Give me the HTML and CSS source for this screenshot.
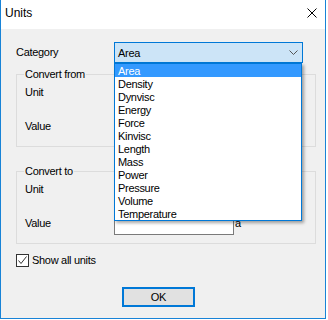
FILE: index.html
```html
<!DOCTYPE html>
<html lang="en">

<head>
  <meta charset="UTF-8">
  <title>Units</title>
  <link rel="stylesheet" href="styles.css">
</head>

<body>

  <div class="window">
    <div class="titlebar">
      <span class="title">Units</span>
      <svg class="close" width="10" height="10" viewBox="0 0 10 10">
        <path d="M0.5 0.5 L9.5 9.5 M9.5 0.5 L0.5 9.5" stroke="#000" stroke-width="1" fill="none"/>
      </svg>
    </div>

    <div class="client">
      <div class="category">
        <label class="cat-label">Category</label>
        <div class="combo active">
          <span>Area</span>
          <svg class="chevron" width="9" height="5" viewBox="0 0 9 5">
            <path d="M0.5 0.5 L4.5 4.5 L8.5 0.5" stroke="#555" stroke-width="1" fill="none"/>
          </svg>
          <ul class="droplist">
            <li class="selected">Area</li>
            <li>Density</li>
            <li>Dynvisc</li>
            <li>Energy</li>
            <li>Force</li>
            <li>Kinvisc</li>
            <li>Length</li>
            <li>Mass</li>
            <li>Power</li>
            <li>Pressure</li>
            <li>Volume</li>
            <li>Temperature</li>
          </ul>
        </div>
      </div>

      <fieldset class="group">
        <legend>Convert from</legend>
        <div class="fields">
          <span>Unit</span>
          <div class="combo plain"></div>
          <span>Value</span>
          <div class="value-row"><div class="textbox"></div><span>a</span></div>
        </div>
      </fieldset>

      <fieldset class="group second">
        <legend>Convert to</legend>
        <div class="fields">
          <span>Unit</span>
          <div class="combo plain"></div>
          <span>Value</span>
          <div class="value-row"><div class="textbox"></div><span>a</span></div>
        </div>
      </fieldset>

      <div class="check-row">
        <span class="checkbox">
          <svg width="11" height="11" viewBox="0 0 11 11">
            <path d="M1.5 5.5 L4 8.5 L9.5 1.5" stroke="#333" stroke-width="1" fill="none"/>
          </svg>
        </span>
        <span>Show all units</span>
      </div>

      <button class="ok">OK</button>
    </div>
  </div>

</body>

</html>
```

FILE: styles.css
```css
* {
  box-sizing: border-box;
}

body {
  margin: 0;
  background: white;
  font-family: "Liberation Sans", Arial, sans-serif;
  font-size: 11px;
  letter-spacing: -0.3px;
  line-height: 13px;
  color: black;
}

.window {
  width: 326px;
  height: 319px;
  border: 1px solid #1883d7;
  border-top: none;
  display: flex;
  flex-direction: column;
}

.titlebar {
  height: 29px;
  background: white;
  display: flex;
  align-items: flex-start;
  padding-left: 4px;
}

.title {
  font-size: 12px;
  letter-spacing: 0;
  line-height: 14px;
  padding-top: 6px;
}

.close {
  margin-left: auto;
  margin-top: 8px;
  margin-right: 8px;
}

.client {
  flex: 1;
  background: #f0f0f0;
  padding: 13px 9px 0 15px;
}

.category {
  display: flex;
  align-items: center;
  height: 21px;
}

.cat-label {
  width: 98px;
}

.combo {
  position: relative;
  height: 21px;
  border: 1px solid #adadad;
  background: #e1e1e1;
}

.combo.active {
  width: 189px;
  border-color: #0078d7;
  background: #cce4f7;
  display: flex;
  align-items: center;
  justify-content: space-between;
  padding: 1px 4px 0 3px;
}

.combo.plain {
  width: 150px;
}

.chevron {
  margin-top: -2px;
}

.droplist {
  position: absolute;
  top: 20px;
  left: -1px;
  width: 188px;
  margin: 0;
  padding: 0;
  list-style: none;
  background: white;
  border: 1px solid #0078d7;
  box-shadow: 2px 2px 3px rgba(0, 0, 0, 0.35);
  z-index: 5;
}

.droplist li {
  height: 13px;
  line-height: 14px;
  padding-left: 3px;
}

.droplist li.selected {
  background: #3399ff;
  color: white;
}

.group {
  margin: 5px 0 0 0;
  width: 300px;
  border: 1px solid #dcdcdc;
  padding: 1px 8px 8px 8px;
}

.group.second {
  margin-top: 18px;
}

.group legend {
  padding: 0 1px;
  margin-left: -1px;
  line-height: 13px;
}

.fields {
  display: grid;
  grid-template-columns: 89px 1fr;
  grid-template-rows: 21px 23px;
  row-gap: 12px;
  align-items: center;
}

.value-row {
  display: flex;
  align-items: center;
  gap: 1px;
  height: 23px;
}

.textbox {
  width: 120px;
  height: 23px;
  background: white;
  border: 1px solid #7a7a7a;
}

.check-row {
  display: flex;
  align-items: center;
  gap: 3px;
  margin-top: 10px;
}

.checkbox {
  width: 13px;
  height: 13px;
  border: 1px solid #333;
  background: white;
  display: flex;
  align-items: center;
  justify-content: center;
}

.ok {
  display: block;
  margin: 20px 0 0 106px;
  width: 73px;
  height: 20px;
  padding: 0;
  border: 2px solid #0078d7;
  background: #e1e1e1;
  font-family: "Liberation Sans", Arial, sans-serif;
  font-size: 11px;
  letter-spacing: -0.3px;
  line-height: 13px;
  color: black;
}
```
